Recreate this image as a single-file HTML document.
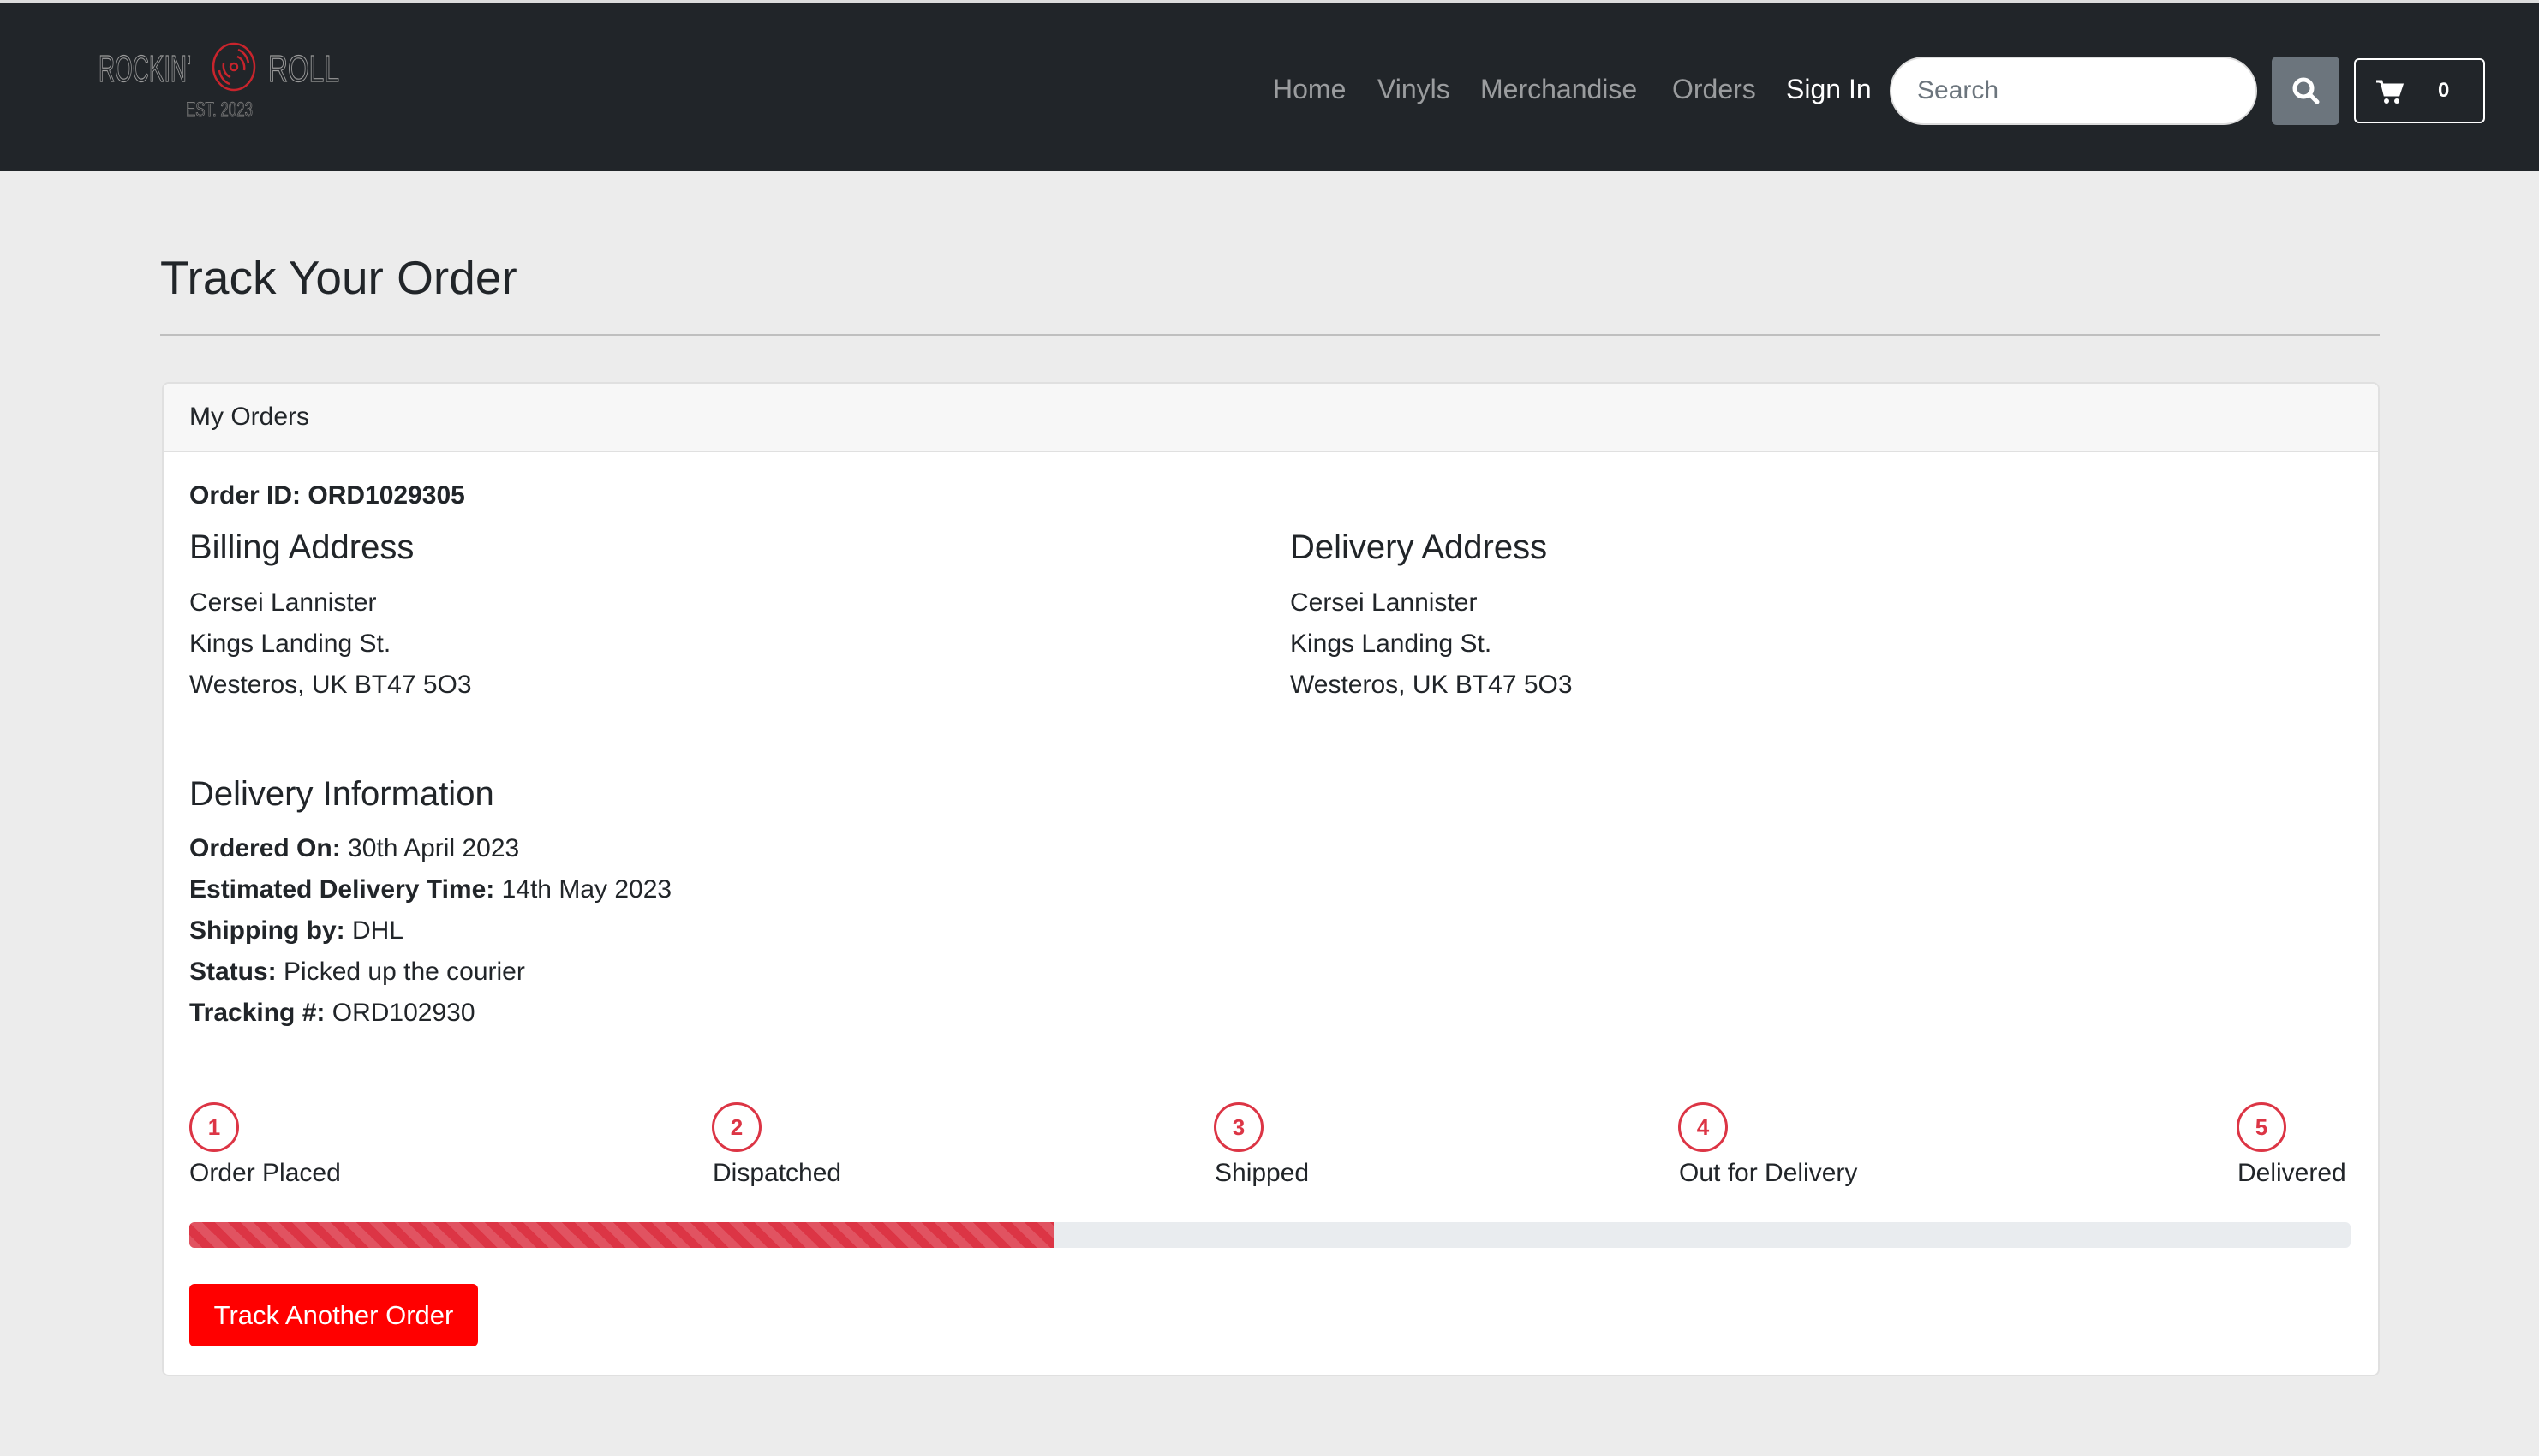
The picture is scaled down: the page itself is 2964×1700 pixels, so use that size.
<!DOCTYPE html>
<html><head><meta charset="utf-8"><style>
*{box-sizing:border-box;margin:0;padding:0}
body{width:2964px;height:1700px;background:#ececec;font-family:"Liberation Sans",sans-serif;color:#212529;position:relative;overflow:hidden}
.top{position:absolute;left:0;top:0;width:2964px;height:4px;background:#dcdcdc}
nav{position:absolute;left:0;top:4px;width:2964px;height:196px;background:#212529}
.a{position:absolute;font-size:32px;color:rgba(255,255,255,.55);top:82px}
.search{position:absolute;left:2206px;top:62px;width:429px;height:80px;background:#fff;border-radius:40px;border:2px solid #ddd;font-size:30px;color:#6c757d;padding:21px 30px}
.sbtn{position:absolute;left:2652px;top:62px;width:79px;height:80px;background:#6c757d;border-radius:6px}
.cart{position:absolute;left:2748px;top:64px;width:153px;height:76px;border:2px solid #fff;border-radius:6px}
.abs{position:absolute;white-space:nowrap}
h1{position:absolute;left:187px;top:292px;font-size:55px;font-weight:normal;color:#212529}
.hr{position:absolute;left:187px;top:390px;width:2591px;height:2px;background:#bfbfbf}
.card{position:absolute;left:189px;top:446px;width:2589px;height:1161px;background:#fff;border:2px solid #e0e0e0;border-radius:8px;overflow:hidden}
.ch{height:80px;background:#f7f7f7;border-bottom:2px solid #e0e0e0}
.t{font-size:30px}
.h{font-size:40px}
.circ{position:absolute;width:58px;height:58px;border:3px solid #dc3545;border-radius:50%;color:#dc3545;font-size:26px;font-weight:bold;text-align:center;line-height:52px;top:1287px}
.bar{position:absolute;left:221px;top:1427px;width:2523px;height:30px;background:#e9ecef;border-radius:6px;overflow:hidden}
.fill{width:1009px;height:30px;background-color:#dc3545;background-image:linear-gradient(45deg,rgba(255,255,255,.15) 25%,transparent 25%,transparent 50%,rgba(255,255,255,.15) 50%,rgba(255,255,255,.15) 75%,transparent 75%,transparent);background-size:30px 30px}
.btn{position:absolute;left:221px;top:1499px;width:337px;height:73px;background:#f00;border-radius:6px;color:#fff;font-size:31px;text-align:center;line-height:73px}
</style></head><body>
<div class="top"></div>
<nav>
<svg style="position:absolute;left:110px;top:44px" width="300" height="100">
<text x="5" y="47" font-family="Liberation Sans, sans-serif" font-size="44" fill="none" stroke="#9a9a9a" stroke-width="1.2" textLength="108" lengthAdjust="spacingAndGlyphs">ROCKIN'</text>
<g fill="none" stroke="#c8242c" stroke-width="2.5"><ellipse cx="163" cy="30" rx="24" ry="27"/><circle cx="163" cy="30" r="4"/><path d="M151 26a12 14 0 0 0 8 16M175 34a12 14 0 0 0-8-16M146 34a18 20 0 0 0 12 16M180 26a18 20 0 0 0-12-16"/></g>
<text x="203" y="47" font-family="Liberation Sans, sans-serif" font-size="44" fill="none" stroke="#9a9a9a" stroke-width="1.2" textLength="83" lengthAdjust="spacingAndGlyphs">ROLL</text>
<text x="107" y="88" font-family="Liberation Sans, sans-serif" font-size="24" fill="none" stroke="#777" stroke-width="1" textLength="78" lengthAdjust="spacingAndGlyphs">EST. 2023</text>
</svg>
<div class="a" style="left:1486px">Home</div>
<div class="a" style="left:1608px">Vinyls</div>
<div class="a" style="left:1728px">Merchandise</div>
<div class="a" style="left:1952px">Orders</div>
<div class="a" style="left:2085px;color:#fff">Sign In</div>
<div class="search">Search</div>
<div class="sbtn"><svg width="79" height="80"><circle cx="37" cy="37" r="10" fill="none" stroke="#fff" stroke-width="5"/><path d="M44 44l9 9" stroke="#fff" stroke-width="5" stroke-linecap="round"/></svg></div>
<div class="cart"><svg style="position:absolute;left:22px;top:22px" width="36" height="32"><path d="M2 3h6l4 16h16l4-12H10" fill="#fff" stroke="#fff" stroke-width="3"/><circle cx="14" cy="26" r="3" fill="#fff"/><circle cx="26" cy="26" r="3" fill="#fff"/></svg><span style="position:absolute;left:96px;top:22px;color:#fff;font-size:24px;font-weight:bold">0</span></div>
</nav>
<h1>Track Your Order</h1>
<div class="hr"></div>
<div class="card"><div class="ch"><span class="abs t" style="left:30px;top:22px">My Orders</span></div></div>
<div class="abs t" style="left:221px;top:562px;font-weight:bold">Order ID: ORD1029305</div>
<div class="abs h" style="left:221px;top:617px">Billing Address</div>
<div class="abs t" style="left:221px;top:680px;line-height:48px">Cersei Lannister<br>Kings Landing St.<br>Westeros, UK BT47 5O3</div>
<div class="abs h" style="left:1506px;top:617px">Delivery Address</div>
<div class="abs t" style="left:1506px;top:680px;line-height:48px">Cersei Lannister<br>Kings Landing St.<br>Westeros, UK BT47 5O3</div>
<div class="abs h" style="left:221px;top:905px">Delivery Information</div>
<div class="abs t" style="left:221px;top:967px;line-height:48px"><b>Ordered On:</b> 30th April 2023<br><b>Estimated Delivery Time:</b> 14th May 2023<br><b>Shipping by:</b> DHL<br><b>Status:</b> Picked up the courier<br><b>Tracking #:</b> ORD102930</div>
<div class="circ" style="left:221px">1</div>
<div class="circ" style="left:831px">2</div>
<div class="circ" style="left:1417px">3</div>
<div class="circ" style="left:1959px">4</div>
<div class="circ" style="left:2611px">5</div>
<div class="abs t" style="left:221px;top:1353px">Order Placed</div>
<div class="abs t" style="left:832px;top:1353px">Dispatched</div>
<div class="abs t" style="left:1418px;top:1353px">Shipped</div>
<div class="abs t" style="left:1960px;top:1353px">Out for Delivery</div>
<div class="abs t" style="left:2612px;top:1353px">Delivered</div>
<div class="bar"><div class="fill"></div></div>
<div class="btn">Track Another Order</div>
</body></html>
